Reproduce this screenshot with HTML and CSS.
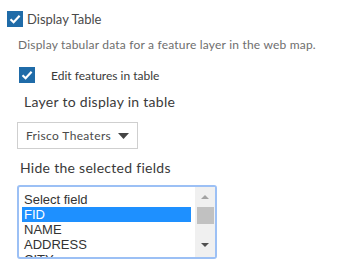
FILE: index.html
```html
<!DOCTYPE html>
<html>
<head>
<meta charset="utf-8">
<link rel="stylesheet" href="styles.css">
</head>
<body>
<div class="panel">
  <label class="check-row main">
    <span class="box"><svg width="16" height="16" viewBox="0 0 16 16"><path d="M3.5 8.2 L6.6 11.2 L12.6 4.8" fill="none" stroke="#fff" stroke-width="2.2"/></svg></span>
    <span class="check-text">Display Table</span>
  </label>
  <p class="desc">Display tabular data for a feature layer in the web map.</p>
  <label class="check-row sub">
    <span class="box"><svg width="16" height="16" viewBox="0 0 16 16"><path d="M3.5 8.2 L6.6 11.2 L12.6 4.8" fill="none" stroke="#fff" stroke-width="2.2"/></svg></span>
    <span class="sub-text">Edit features in table</span>
  </label>
  <div class="label layer-label">Layer to display in table</div>
  <div class="dropdown">
    <span class="dd-text">Frisco Theaters</span>
    <svg class="caret" width="11" height="6" viewBox="0 0 11 6"><path d="M0 0 H11 L5.5 6 Z" fill="#444"/></svg>
  </div>
  <div class="label hide-label">Hide the selected fields</div>
  <div class="listbox">
    <div class="options">
      <div class="opt">Select field</div>
      <div class="opt selected">FID</div>
      <div class="opt">NAME</div>
      <div class="opt">ADDRESS</div>
      <div class="opt">CITY</div>
    </div>
    <div class="scrollbar">
      <svg class="arrow" width="20" height="20" viewBox="0 0 20 20"><path d="M6 12 H14 L10 8 Z" fill="#a3a3a3"/></svg>
      <div class="thumb"></div>
      <div class="track"></div>
      <svg class="arrow" width="20" height="20" viewBox="0 0 20 20"><path d="M6 6 H14 L10 10 Z" fill="#505050"/></svg>
    </div>
  </div>
</div>
</body>
</html>
```
FILE: styles.css
```css
html, body {
  margin: 0;
  padding: 0;
  background: #fff;
}
.panel {
  font-family: Lato, "Noto Sans", sans-serif;
  color: #4c4c4c;
  display: flex;
  flex-direction: column;
  align-items: flex-start;
  padding-top: 11px;
}
.check-row {
  display: flex;
  align-items: center;
}
.box {
  width: 16px;
  height: 16px;
  background: #1f6ba8;
  display: block;
}
.box svg { display: block; }
.main {
  margin-left: 7px;
}
.check-text {
  margin-left: 4px;
  font-size: 13px;
  color: #4a4a4a;
}
.desc {
  margin: 10px 0 0 18px;
  font-size: 12px;
  letter-spacing: 0.2px;
  color: #6e6e6e;
  line-height: 16px;
}
.sub {
  margin: 14px 0 0 19px;
}
.sub-text {
  margin-left: 16px;
  font-size: 12px;
  color: #3a3a3a;
}
.label {
  font-size: 14px;
  letter-spacing: 0.28px;
  color: #3a3a3a;
  line-height: 18px;
}
.layer-label {
  margin: 10px 0 0 24px;
}
.dropdown {
  margin: 11px 0 0 17px;
  height: 25px;
  border: 1px solid #cfcfcf;
  display: flex;
  align-items: center;
  justify-content: space-between;
  padding: 0 8px;
  width: 103px;
  font-size: 12px;
  color: #4a4a4a;
}
.dd-text { letter-spacing: 0.35px; }
.caret { display: block; }
.hide-label {
  margin: 10px 0 0 20px;
}
.listbox {
  margin: 8px 0 0 17px;
  width: 196px;
  height: 70px;
  border: 2px solid #9cc0f5;
  border-radius: 3px;
  display: flex;
  overflow: hidden;
}
.options {
  flex: 1;
  padding: 5px 4px 0 3px;
  font-family: "Liberation Sans", Arial, sans-serif;
  font-size: 13px;
  color: #333;
  overflow: hidden;
}
.opt {
  height: 15px;
  line-height: 15px;
  padding-left: 2px;
}
.opt.selected {
  background: #1e90ff;
  color: #fff;
}
.scrollbar {
  width: 20px;
  flex: none;
  background: #f0f0f0;
  display: flex;
  flex-direction: column;
}
.arrow { display: block; flex: none; }
.thumb {
  margin: 0 1px 0 2px;
  height: 17px;
  background: #c1c1c1;
}
.track { flex: 1; }
```
